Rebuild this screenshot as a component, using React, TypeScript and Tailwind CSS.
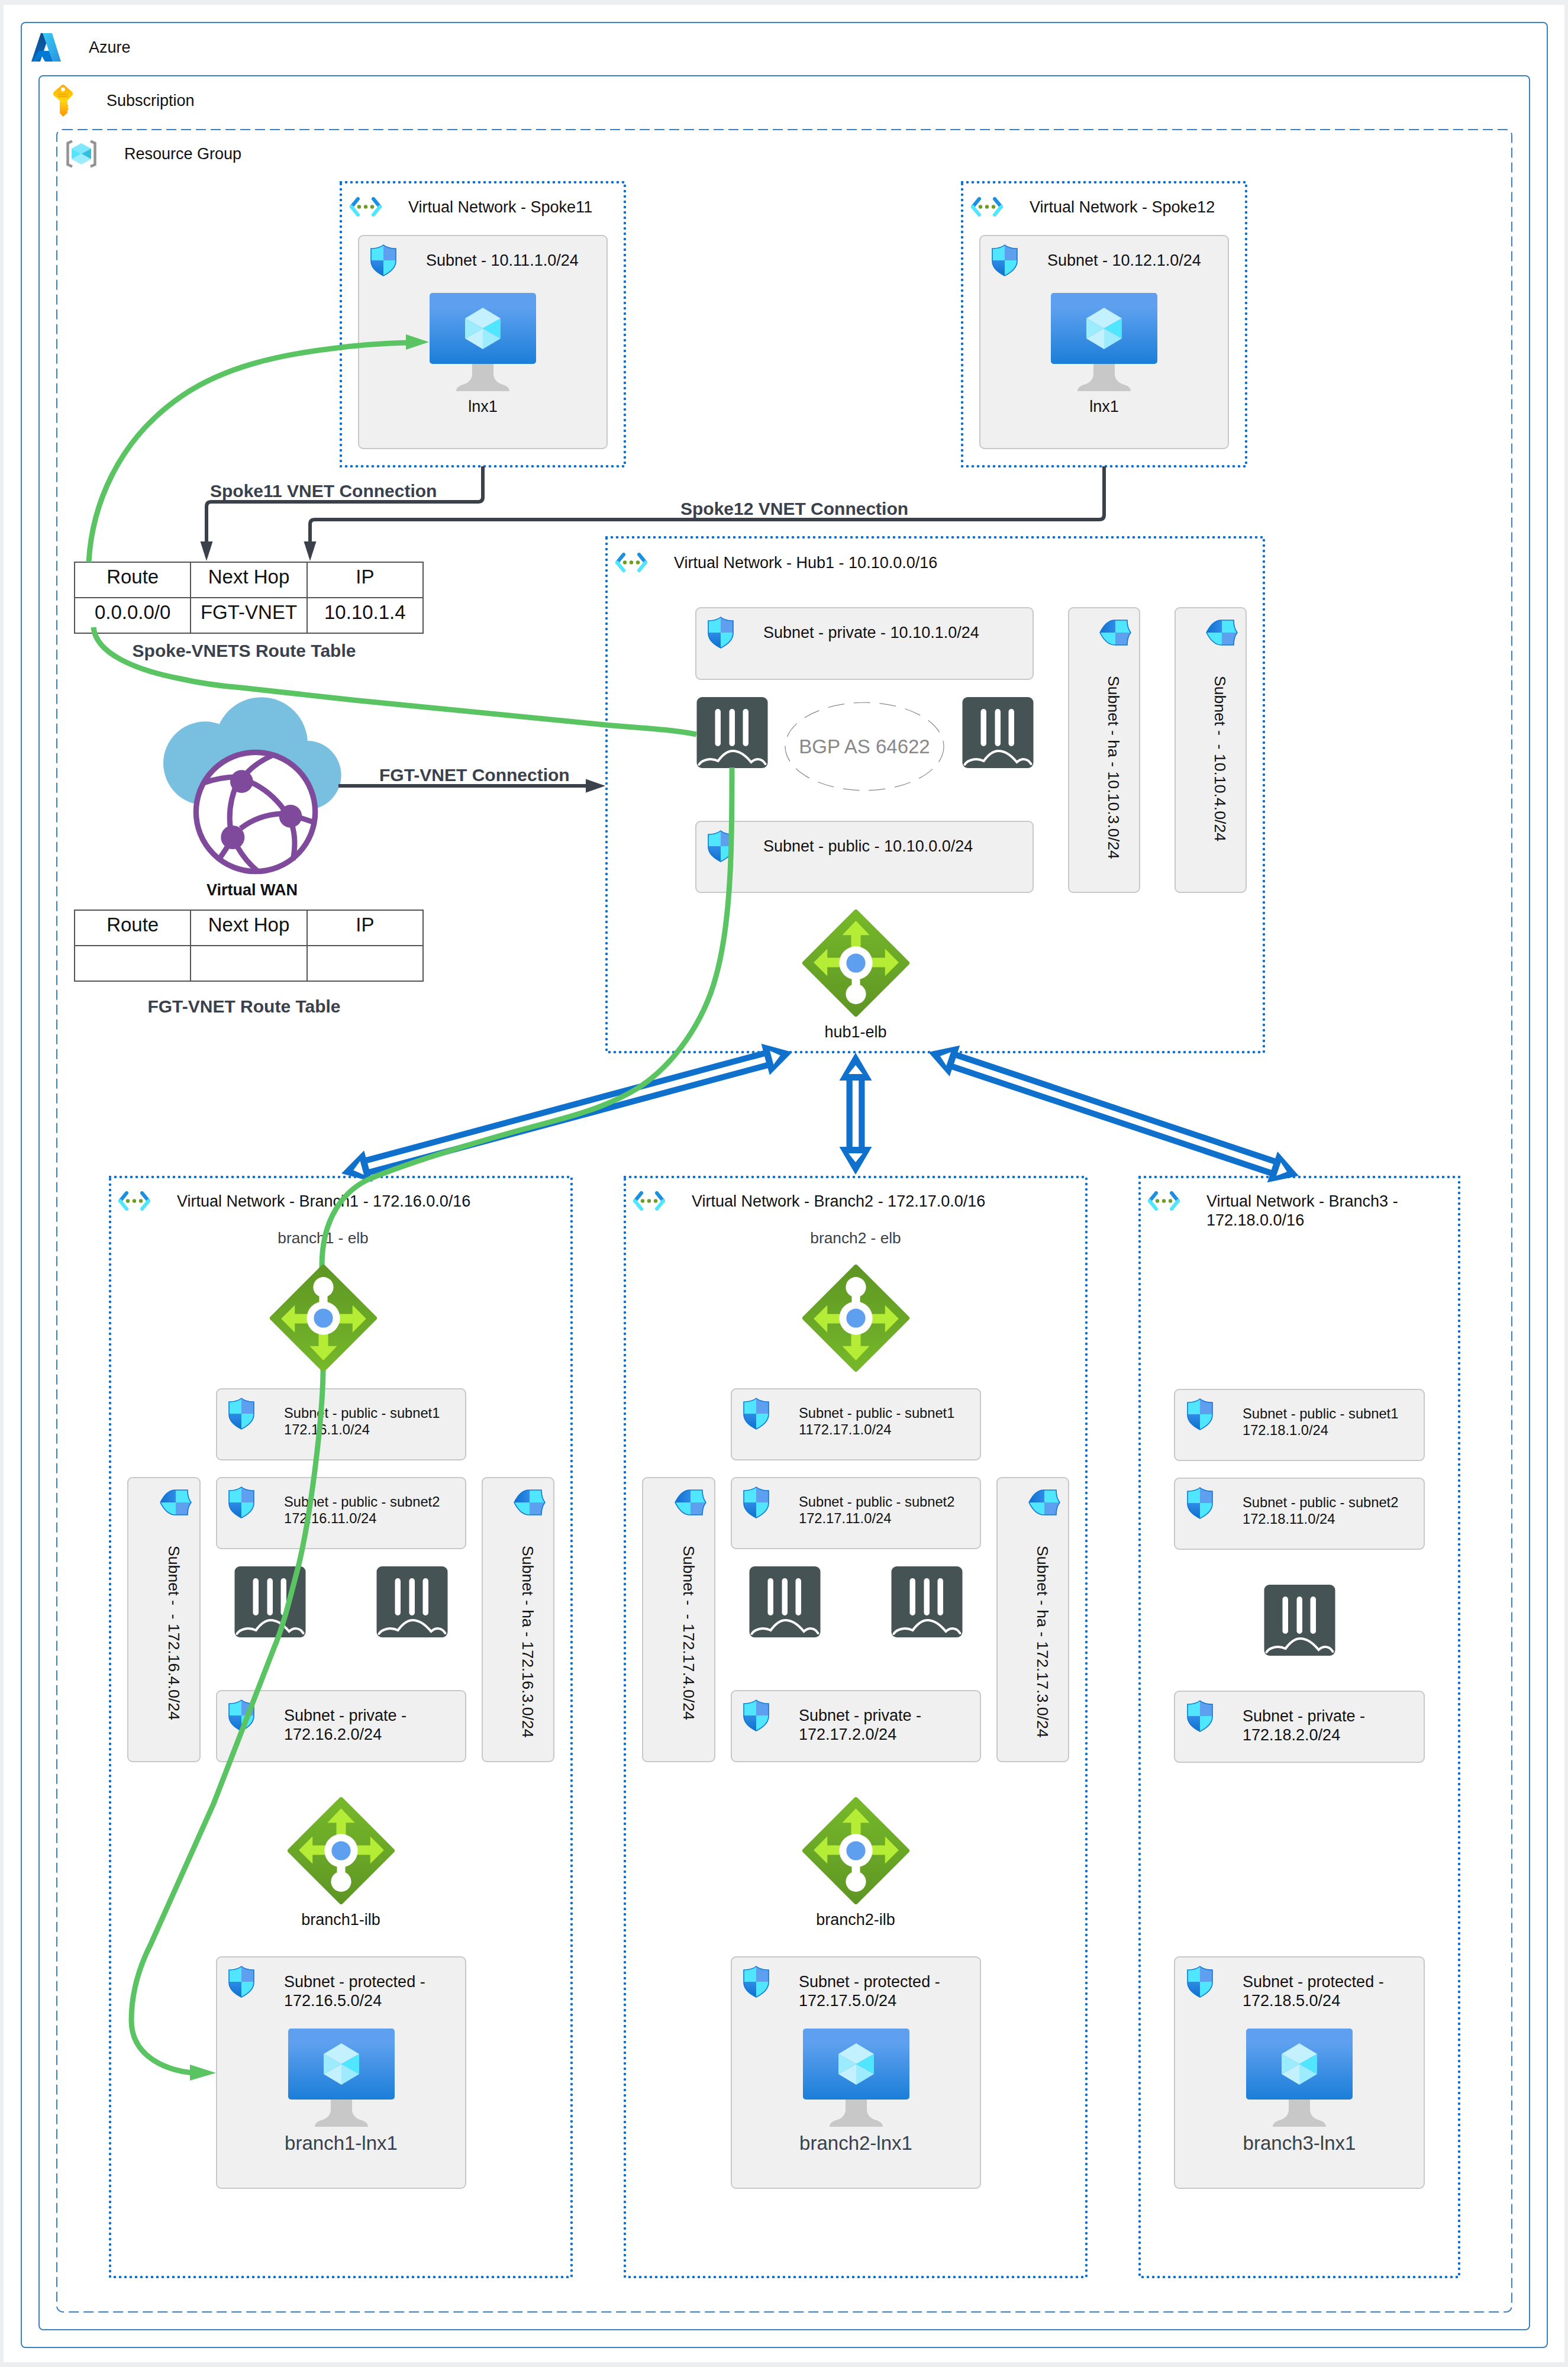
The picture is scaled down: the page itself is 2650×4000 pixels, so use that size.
import type { ReactNode } from "react"

const BLUE = "#1071cd"
const GREEN = "#5ac463"
const SLATE = "#3a414a"

const AzureLogo = () => (
  <svg width="50" height="48" viewBox="0 0 50 48" className="shrink-0">
    <defs>
      <linearGradient id="az-l" x1="0" y1="0" x2="0" y2="1">
        <stop offset="0" stopColor="#114a8b" />
        <stop offset="1" stopColor="#0669bc" />
      </linearGradient>
      <linearGradient id="az-r" x1="0" y1="0" x2="1" y2="1">
        <stop offset="0" stopColor="#3ccbf4" />
        <stop offset="1" stopColor="#2892df" />
      </linearGradient>
    </defs>
    <path d="M16 0H31L15 48H0Z" fill="url(#az-l)" />
    <path d="M12 30H31L37 48H23L18 39L8 48H3Z" fill="#0078d4" />
    <path d="M19 0H35L50 48H36Z" fill="url(#az-r)" />
  </svg>
)

const KeyIcon = () => (
  <svg width="33" height="54" viewBox="0 0 33 54" className="shrink-0">
    <defs>
      <linearGradient id="key-g" x1="0" y1="0" x2="0" y2="1">
        <stop offset="0" stopColor="#ffa800" />
        <stop offset="0.5" stopColor="#ffd70f" />
        <stop offset="1" stopColor="#ff9300" />
      </linearGradient>
    </defs>
    <path
      d="M16.500 0C18 0 19 1 20 2L31.500 12C33.500 14 33.500 17 31.500 19L24 27V34L26 36L24 38.500L26 41L24 43.500V48L16.500 54L11 48V27L1.500 19C-.5 17-.5 14 1.500 12L13 2C14 1 15 0 16.500 0Z"
      fill="url(#key-g)"
    />
    <circle cx="16.500" cy="8" r="3.500" fill="#fff" />
    <path d="M8 16.500H25M8 20H25" stroke="#f29c11" strokeWidth="1.500" />
  </svg>
)

const ResourceGroupIcon = () => (
  <svg width="51" height="48" viewBox="0 0 51 48" className="shrink-0">
    <path d="M10 2.500L2.500 6V42L10 45.500M41 2.500L48.500 6V42L41 45.500" fill="none" stroke="#949494" strokeWidth="4.500" />
    <path d="M25.500 6L42 15L25.500 24L9 15Z" fill="#7fe6fb" />
    <path d="M42 15V33L25.500 24Z" fill="#32bedd" />
    <path d="M9 15V33L25.500 24Z" fill="#50e6ff" />
    <path d="M9 33L25.500 42L42 33L25.500 24Z" fill="#9cebff" />
  </svg>
)

const VnetIcon = () => (
  <svg width="54" height="33" viewBox="0 0 54 33" className="shrink-0">
    <path d="M14 3L3 16.500" stroke="#1b8fe0" strokeWidth="6" strokeLinecap="round" fill="none" />
    <path d="M3 16.500L14 30" stroke="#50e6ff" strokeWidth="6" strokeLinecap="round" fill="none" />
    <path d="M40 3L51 16.500" stroke="#1b8fe0" strokeWidth="6" strokeLinecap="round" fill="none" />
    <path d="M51 16.500L40 30" stroke="#50e6ff" strokeWidth="6" strokeLinecap="round" fill="none" />
    <circle cx="16" cy="16.500" r="3.200" fill="#6f9b23" />
    <circle cx="27" cy="16.500" r="3.200" fill="#6f9b23" />
    <circle cx="38" cy="16.500" r="3.200" fill="#6f9b23" />
  </svg>
)

const ShieldIcon = ({ className = "" }: { className?: string }) => (
  <svg width="44" height="54" viewBox="0 0 44 54" className={`shrink-0 ${className}`}>
    <defs>
      <clipPath id="shield-clip">
        <path d="M22 1C27 5 35 7 43 7V28C43 40 32 48 22 53C12 48 1 40 1 28V7C9 7 17 5 22 1Z" />
      </clipPath>
      <linearGradient id="shield-b" x1="0" y1="0" x2="0" y2="1">
        <stop offset="0" stopColor="#2f8be6" />
        <stop offset="1" stopColor="#0f6fcf" />
      </linearGradient>
    </defs>
    <g clipPath="url(#shield-clip)">
      <rect width="22" height="27" fill="#50e6ff" />
      <rect x="22" width="22" height="27" fill="#5ea0ef" />
      <rect y="27" width="22" height="27" fill="url(#shield-b)" />
      <rect x="22" y="27" width="22" height="27" fill="#50e6ff" />
    </g>
    <path d="M22 1C27 5 35 7 43 7V28C43 40 32 48 22 53C12 48 1 40 1 28V7C9 7 17 5 22 1Z" fill="none" stroke="#0f78d4" strokeWidth="1.600" />
  </svg>
)

const MonitorIcon = ({ className = "" }: { className?: string }) => (
  <svg width="180" height="166" viewBox="0 0 180 166" className={`mx-auto block ${className}`}>
    <defs>
      <linearGradient id="vm-g" x1="0" y1="0" x2="0" y2="1">
        <stop offset="0.2" stopColor="#5ea0ef" />
        <stop offset="1" stopColor="#1b7ed8" />
      </linearGradient>
    </defs>
    <path d="M72 120H108V137C108 147 116 153 124 155C130 157 135 160 135 166H45C45 160 50 157 56 155C64 153 72 147 72 137Z" fill="#c8c8c8" />
    <rect width="180" height="120" rx="5" fill="url(#vm-g)" />
    <path d="M90 25L120 43L90 60L60 43Z" fill="#c3f1ff" />
    <path d="M120 43V77L90 60Z" fill="#50e6ff" />
    <path d="M120 77L90 95V60Z" fill="#9cebff" />
    <path d="M90 95L60 77L90 60Z" fill="#c3f1ff" />
    <path d="M60 77V43L90 60Z" fill="#9cebff" />
  </svg>
)

const FortiIcon = () => (
  <svg width="121" height="120" viewBox="0 0 120 120" className="shrink-0">
    <rect width="120" height="120" rx="9" fill="#465355" />
    <rect x="31" y="20" width="9.500" height="63" rx="4.700" fill="#fff" />
    <rect x="55" y="20" width="9.500" height="63" rx="4.700" fill="#fff" />
    <rect x="78" y="20" width="9.500" height="63" rx="4.700" fill="#fff" />
    <path d="M4 114C9 106 23 102 36 108C44 97 52 91 61 91C72 91 83 99 92 110C100 103 110 103 116 113" fill="none" stroke="#fff" strokeWidth="4" strokeLinecap="round" />
  </svg>
)

const LoadBalancerIcon = ({ flip = false }: { flip?: boolean }) => (
  <svg width="181" height="181" viewBox="0 0 180 180" className={flip ? "-scale-y-100 shrink-0" : "shrink-0"}>
    <defs>
      <linearGradient id="lb-g" x1="0" y1="0" x2="0" y2="1">
        <stop offset="0" stopColor="#76b82a" />
        <stop offset="1" stopColor="#5e9624" />
      </linearGradient>
    </defs>
    <path d="M90 4L176 90L90 176L4 90Z" fill="url(#lb-g)" stroke="url(#lb-g)" strokeWidth="8" strokeLinejoin="round" />
    <path d="M90 19L113 43H98V70H82V43H67Z" fill="#b4ec36" />
    <path d="M19 89L42 66V81H70V97H42V112Z" fill="#b4ec36" />
    <path d="M162 89L139 66V81H110V97H139V112Z" fill="#b4ec36" />
    <rect x="83" y="100" width="14" height="40" fill="#fff" />
    <circle cx="90" cy="142" r="17" fill="#fff" />
    <circle cx="90" cy="90" r="28" fill="#fff" />
    <circle cx="90" cy="90" r="16" fill="#5ea0ef" />
  </svg>
)

const VirtualWanIcon = () => (
  <svg viewBox="0 0 1020 1020" className="absolute left-[165px] top-[942px] h-[340px] w-[340px]">
    <circle cx="260" cy="390" r="212" fill="#79c0e0" />
    <circle cx="545" cy="290" r="235" fill="#79c0e0" />
    <circle cx="775" cy="450" r="175" fill="#79c0e0" />
    <rect x="260" y="300" width="520" height="300" fill="#79c0e0" />
    <circle cx="516" cy="636" r="302" fill="#fff" stroke="#7f4a9b" strokeWidth="28" />
    <g fill="none" stroke="#7f4a9b" strokeWidth="27">
      <path d="M250 490Q330 460 420 458" />
      <path d="M470 440Q520 385 610 345" />
      <path d="M410 520Q375 620 388 720" />
      <path d="M490 485Q590 530 660 625" />
      <path d="M440 720Q530 650 650 645" />
      <path d="M740 665L815 690" />
      <path d="M700 700Q725 780 705 880" />
      <path d="M375 810L335 870" />
      <path d="M425 815Q465 885 525 935" />
    </g>
    <circle cx="445" cy="482" r="58" fill="#7f4a9b" />
    <circle cx="693" cy="658" r="58" fill="#7f4a9b" />
    <circle cx="400" cy="765" r="60" fill="#7f4a9b" />
  </svg>
)

type SubnetProps = {
  className?: string
  small?: boolean
  lines: string[]
  pad?: string
  children?: ReactNode
}

const Subnet = ({ className = "", small, lines, pad = "pl-[19px] pt-[14px]", children }: SubnetProps) => (
  <div className={`rounded-[9px] border-2 border-[#c8c8c8] bg-[#f0f0f0] ${className}`}>
    <div className={`flex items-start gap-[50px] ${pad}`}>
      <ShieldIcon />
      <div className={small ? "mt-[13px] whitespace-nowrap text-[23.7px] leading-[27.5px] text-[#111]" : "mt-[11px] whitespace-nowrap text-[27px] leading-[32px] text-[#111]"}>
        {lines.map((line) => (
          <div key={line}>{line}</div>
        ))}
      </div>
    </div>
    {children}
  </div>
)

const SideSubnet = ({ className, label }: { className: string; label: string }) => (
  <div className={`flex flex-col items-end rounded-[9px] border-2 border-[#c8c8c8] bg-[#f0f0f0] pr-[13px] pt-[19px] ${className}`}>
    <div className="flex h-[44px] w-[54px] items-center justify-center">
      <ShieldIcon className="rotate-90" />
    </div>
    <div className="mt-[51px] flex w-[60px] justify-center">
      <span className="whitespace-pre text-[26.67px] leading-[30px] text-[#111] [writing-mode:vertical-rl]">{label}</span>
    </div>
  </div>
)

const VnetHeader = ({ title, pad = "pl-[12px] pt-[22px]" }: { title: ReactNode; pad?: string }) => (
  <div className={`flex items-start gap-[45px] ${pad}`}>
    <VnetIcon />
    <div className="mt-px whitespace-nowrap text-[27px] leading-[32px] text-[#111]">{title}</div>
  </div>
)

// the dots of the border are drawn, since a css dotted border has a tighter period
const VnetFrame = ({ className, children }: { className: string; children: ReactNode }) => (
  <div className={`absolute flex flex-col border-4 border-transparent ${className}`}>
    <svg className="pointer-events-none absolute -left-[4px] -top-[4px] h-[calc(100%+8px)] w-[calc(100%+8px)]">
      <rect
        x="2"
        y="2"
        className="h-[calc(100%-4px)] w-[calc(100%-4px)]"
        fill="none"
        stroke={BLUE}
        strokeWidth="4.600"
        strokeLinecap="round"
        strokeDasharray="0 9"
      />
    </svg>
    {children}
  </div>
)

const Balancer = ({ className, label }: { className: string; label: string }) => (
  <div className={`flex w-[240px] flex-col items-center ${className}`}>
    <LoadBalancerIcon />
    <div className="mt-[11px] text-[27px] leading-[30px] text-[#111]">{label}</div>
  </div>
)

const SpokeNet = ({ className, name, ip }: { className: string; name: string; ip: string }) => (
  <VnetFrame className={`top-[88px] h-[484px] w-[484px] ${className}`}>
    <VnetHeader title={`Virtual Network - ${name}`} pad="pl-[13px] pt-[23px]" />
    <Subnet className="ml-[27px] mt-[31px] h-[362px] w-[422px]" lines={[`Subnet - ${ip}`]}>
      <MonitorIcon className="mt-[28px]" />
      <div className="mt-[11px] text-center text-[27px] leading-[30px] text-[#111]">lnx1</div>
    </Subnet>
  </VnetFrame>
)

const ProtectedSubnet = ({ className, ip, name, pad }: { className: string; ip: string; name: string; pad?: string }) => (
  <Subnet className={`h-[393px] ${className}`} pad={pad} lines={["Subnet - protected -", ip]}>
    <MonitorIcon className="mt-[31px]" />
    <div className="mt-[9px] text-center text-[33px] leading-[38px] text-[#3a414a]">{name}</div>
  </Subnet>
)

type BranchProps = {
  className: string
  n: number
  octet: number
  elb: string
  firstSubnet: string
}

const Branch = ({ className, n, octet, elb, firstSubnet }: BranchProps) => (
  <VnetFrame className={`top-[1769px] h-[1863px] w-[784px] ${className}`}>
    <VnetHeader title={`Virtual Network - Branch${n} - 172.${octet}.0.0/16`} />
    <div className={`mt-[31px] flex w-[240px] flex-col items-center ${elb}`}>
      <div className="text-[26.3px] leading-[30px] text-[#3a414a]">{`branch${n} - elb`}</div>
      <div className="relative z-10 mt-[30px]">
        <LoadBalancerIcon flip />
      </div>
    </div>
    <div className="ml-[27px] mt-[28px] grid grid-cols-[124px_423px_123px] grid-rows-[122px_122px_182px_122px] gap-x-[26px] gap-y-[28px]">
      <Subnet small className="col-start-2 row-start-1" lines={["Subnet - public - subnet1", firstSubnet]} />
      <SideSubnet className="col-start-1 row-span-3 row-start-2" label={`Subnet -  - 172.${octet}.4.0/24`} />
      <Subnet small className="col-start-2 row-start-2" lines={["Subnet - public - subnet2", `172.${octet}.11.0/24`]} />
      <SideSubnet className="col-start-3 row-span-3 row-start-2" label={`Subnet - ha - 172.${octet}.3.0/24`} />
      <div className="col-start-2 row-start-3 flex gap-[119px] pl-[31px] pt-px">
        <FortiIcon />
        <FortiIcon />
      </div>
      <Subnet className="col-start-2 row-start-4" lines={["Subnet - private -", `172.${octet}.2.0/24`]} />
    </div>
    <Balancer className="ml-[268px] mt-[59px]" label={`branch${n}-ilb`} />
    <ProtectedSubnet className="ml-[177px] mt-[47px] w-[423px]" ip={`172.${octet}.5.0/24`} name={`branch${n}-lnx1`} />
  </VnetFrame>
)

const BranchThree = () => (
  <VnetFrame className="left-[1829px] top-[1769px] h-[1863px] w-[544px]">
    <VnetHeader
      title={
        <>
          Virtual Network - Branch3 -
          <br />
          172.18.0.0/16
        </>
      }
    />
    <div className="ml-[56px] mt-[269px] flex w-[424px] flex-col gap-[28px]">
      <Subnet small pad="pl-[20px] pt-[14px]" className="h-[122px]" lines={["Subnet - public - subnet1", "172.18.1.0/24"]} />
      <Subnet small pad="pl-[20px] pt-[14px]" className="h-[122px]" lines={["Subnet - public - subnet2", "172.18.11.0/24"]} />
      <div className="flex h-[182px] items-center justify-center">
        <FortiIcon />
      </div>
      <Subnet pad="pl-[20px] pt-[14px]" className="h-[122px]" lines={["Subnet - private -", "172.18.2.0/24"]} />
    </div>
    <ProtectedSubnet pad="pl-[20px] pt-[14px]" className="ml-[56px] mt-[327px] w-[424px]" ip="172.18.5.0/24" name="branch3-lnx1" />
  </VnetFrame>
)

const RouteTable = ({ className, caption, captionGap, cells }: { className: string; caption: string; captionGap: string; cells: string[] }) => (
  <div className={`absolute w-[591px] ${className}`}>
    <table className="w-full table-fixed border-collapse text-center text-[33px] text-[#111]">
      <tbody>
        {[["Route", "Next Hop", "IP"], cells].map((row, i) => (
          <tr key={i} className="h-[60px]">
            {row.map((cell, j) => (
              <td key={j} className="border-2 border-[#555] pb-[10px] align-middle leading-[38px]">
                {cell}
              </td>
            ))}
          </tr>
        ))}
      </tbody>
    </table>
    <div className={`pr-4 text-center text-[30px] font-bold leading-[34px] text-[#3a414a] ${captionGap}`}>{caption}</div>
  </div>
)

// blue hollow two-headed arrow: two triangles and a channel between them
const DoubleArrow = ({ x1, y1, x2, y2 }: { x1: number; y1: number; x2: number; y2: number }) => {
  const len = Math.hypot(x2 - x1, y2 - y1)
  const ux = (x2 - x1) / len
  const uy = (y2 - y1) / len
  const at = (d: number, side: number, fromEnd: boolean) => {
    const bx = fromEnd ? x2 - ux * d : x1 + ux * d
    const by = fromEnd ? y2 - uy * d : y1 + uy * d
    return `${bx - uy * side},${by + ux * side}`
  }
  const head = (fromEnd: boolean) => (
    <>
      <polygon points={`${at(0, 0, fromEnd)} ${at(47, 27.5, fromEnd)} ${at(47, -27.5, fromEnd)}`} fill={BLUE} />
      <polygon points={`${at(21, 0, fromEnd)} ${at(36, 12, fromEnd)} ${at(36, -12, fromEnd)}`} fill="#fff" />
    </>
  )
  return (
    <g>
      <line x1={x1 + ux * 46} y1={y1 + uy * 46} x2={x2 - ux * 46} y2={y2 - uy * 46} stroke={BLUE} strokeWidth="31" />
      <line x1={x1 + ux * 47} y1={y1 + uy * 47} x2={x2 - ux * 47} y2={y2 - uy * 47} stroke="#fff" strokeWidth="10.500" />
      {head(false)}
      {head(true)}
    </g>
  )
}

const Connectors = () => (
  <svg viewBox="95 218 2461 3690" className="pointer-events-none absolute inset-0 z-[5] h-full w-full">
    <g fill="none" stroke={SLATE} strokeWidth="6">
      <path d="M816 788V840Q816 848 808 848H357Q349 848 349 856V918" />
      <path d="M1866 788V870Q1866 878 1858 878H532Q524 878 524 886V918" />
      <path d="M572 1328H992" />
    </g>
    <polygon points="349,948 338.500,915 359.500,915" fill={SLATE} />
    <polygon points="524,948 513.500,915 534.500,915" fill={SLATE} />
    <polygon points="1023,1328 990,1316.500 990,1339.500" fill={SLATE} />
    <DoubleArrow x1={1339} y1={1778} x2={577} y2={1983} />
    <DoubleArrow x1={1446} y1={1779} x2={1446} y2={1985} />
    <DoubleArrow x1={1569} y1={1778} x2={2195} y2={1987} />
    <g fill="none" stroke={GREEN} strokeWidth="9">
      <path d="M150 950C155 860 195 745 309 668C380 620 470 600 561 589C605 583 650 580 690 579" />
      <path d="M158 1060C162 1105 230 1132 300 1146C340 1155 380 1160 407 1162L597 1183L1023 1225C1080 1230 1130 1232 1177 1241" />
      <path d="M1237 1297C1237 1400 1238 1550 1210 1650C1190 1725 1140 1800 1076 1840C1010 1880 930 1895 867 1913C800 1932 690 1965 625 1992C580 2012 544 2060 544 2139L546 2318C545 2400 525 2560 505 2644C490 2700 480 2745 463 2785L361 3048L254 3287C230 3335 222 3375 222 3414C222 3480 290 3500 325 3503" />
    </g>
    <polygon points="725,578 686,565 686,591" fill={GREEN} />
    <polygon points="365,3503 321,3489 321,3516" fill={GREEN} />
  </svg>
)

const HubNet = () => (
  <VnetFrame className="left-[928px] top-[688px] h-[874px] w-[1115px]">
    <VnetHeader title="Virtual Network - Hub1 - 10.10.0.0/16" pad="pl-[13px] pt-[24px]" />
    <div className="ml-[148px] mt-[59px] grid grid-cols-[572px_122px_122px] grid-rows-[123px_238px_122px] gap-x-[58px]">
      <Subnet className="col-start-1 row-start-1" lines={["Subnet - private - 10.10.1.0/24"]} />
      <SideSubnet className="col-start-2 row-span-3 row-start-1" label="Subnet - ha - 10.10.3.0/24" />
      <SideSubnet className="col-start-3 row-span-3 row-start-1" label="Subnet -  - 10.10.4.0/24" />
      <div className="col-start-1 row-start-2 flex items-start pl-[2px] pt-[29px]">
        <FortiIcon />
        <div className="relative ml-[28px] mr-[30px] mt-[8px] flex h-[151px] w-[271px] items-center justify-center text-[33px] text-[#888]">
          <svg viewBox="0 0 271 151" className="absolute inset-0 h-full w-full">
            <ellipse cx="135.500" cy="75.500" rx="134.500" ry="74.500" fill="none" stroke="#888" strokeWidth="1.200" strokeDasharray="28 16" />
          </svg>
          <span className="relative">BGP AS 64622</span>
        </div>
        <FortiIcon />
      </div>
      <Subnet className="col-start-1 row-start-3" lines={["Subnet - public - 10.10.0.0/24"]} />
    </div>
    <Balancer className="ml-[299px] mt-[28px]" label="hub1-elb" />
  </VnetFrame>
)

const EdgeLabel = ({ className, children }: { className: string; children: ReactNode }) => (
  <div className={`absolute whitespace-nowrap text-[30px] font-bold leading-[34px] text-[#3a414a] ${className}`}>{children}</div>
)

export default function App() {
  return (
    <div className="h-[4000px] w-[2650px] bg-[#eceef0] pl-[6px] pt-[8px] [font-family:'Liberation_Sans',Arial,sans-serif]">
      <div className="h-[3984px] w-[2638px] bg-white pl-[29px] pt-[29px]">
        <div className="h-[3931px] w-[2581px] rounded-[8px] border-2 border-[#3b80bf]">
          <div className="flex items-center gap-[47px] pb-[23px] pl-[16px] pt-[17px]">
            <AzureLogo />
            <span className="text-[27px] leading-[32px] text-[#111]">Azure</span>
          </div>
          <div className="ml-[28px] h-[3811px] w-[2521px] rounded-[8px] border-2 border-[#3b80bf]">
            <div className="flex items-center gap-[57px] pb-[21px] pl-[23px] pt-[14px]">
              <KeyIcon />
              <span className="text-[27px] leading-[32px] text-[#111]">Subscription</span>
            </div>
            <div className="relative ml-[28px] h-[3690px] w-[2461px]">
              <svg className="absolute inset-0 h-full w-full">
                <rect x="1" y="1" width="2459" height="3688" rx="10" fill="none" stroke="#3b80bf" strokeWidth="2" strokeDasharray="17 8" />
              </svg>
              <div className="absolute left-[17px] top-[18px] flex items-center gap-[47px]">
                <ResourceGroupIcon />
                <span className="text-[27px] leading-[32px] text-[#111]">Resource Group</span>
              </div>

              <SpokeNet className="left-[479px]" name="Spoke11" ip="10.11.1.0/24" />
              <SpokeNet className="left-[1529px]" name="Spoke12" ip="10.12.1.0/24" />

              <EdgeLabel className="left-[260px] top-[595px]">Spoke11 VNET Connection</EdgeLabel>
              <EdgeLabel className="left-[1055px] top-[625px]">Spoke12 VNET Connection</EdgeLabel>
              <EdgeLabel className="left-[546px] top-[1075px]">FGT-VNET Connection</EdgeLabel>

              <RouteTable
                className="left-[30px] top-[731px]"
                caption="Spoke-VNETS Route Table"
                captionGap="mt-[12px]"
                cells={["0.0.0.0/0", "FGT-VNET", "10.10.1.4"]}
              />
              <RouteTable
                className="left-[30px] top-[1319px]"
                caption="FGT-VNET Route Table"
                captionGap="mt-[25px]"
                cells={["", "", ""]}
              />

              <VirtualWanIcon />
              <div className="absolute left-[231px] top-[1271px] w-[200px] text-center text-[27px] font-bold leading-[30px] text-[#111]">
                Virtual WAN
              </div>

              <HubNet />
              <Branch className="left-[89px]" n={1} octet={16} elb="ml-[238px]" firstSubnet="172.16.1.0/24" />
              <Branch className="left-[959px]" n={2} octet={17} elb="ml-[268px]" firstSubnet="1172.17.1.0/24" />
              <BranchThree />

              <Connectors />
            </div>
          </div>
        </div>
      </div>
    </div>
  )
}
